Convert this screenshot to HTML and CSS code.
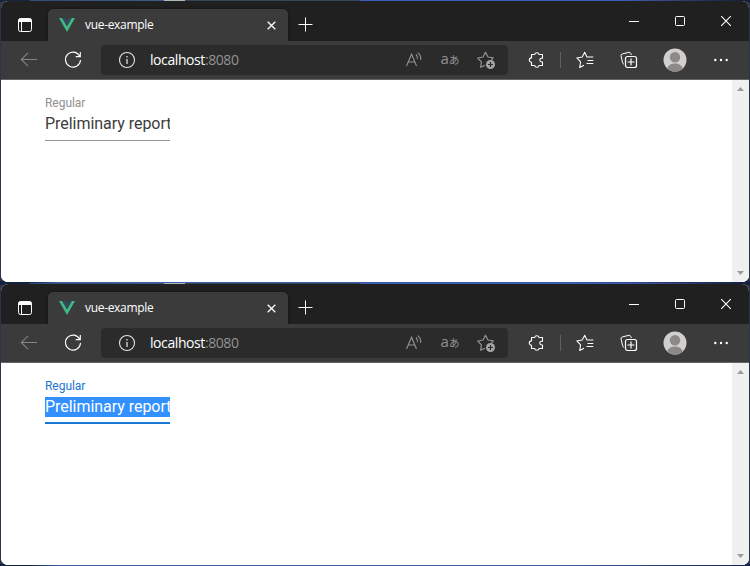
FILE: index.html
```
<!DOCTYPE html>
<html lang="en">
<head>
<meta charset="utf-8">
<title>vue-example</title>
<link rel="stylesheet" href="styles.css">
</head>
<body>
<svg class="defs" aria-hidden="true">
  <symbol id="panes" viewBox="0 0 24 24"><rect x="5.5" y="5.5" width="13" height="13" rx="2" fill="none" stroke="#fff"/><path d="M5.5 7q0-1.500 1.500-1.500h10q1.500 0 1.500 1.500v2h-13z" fill="#fff"/><path d="M8.500 9v9.500" stroke="#fff"/></symbol>
  <symbol id="vue" viewBox="0 0 16 14"><path d="M0 0h3.200L8 8.300 12.800 0H16L8 14z" fill="#41b883"/><path d="M3.200 0h3L8 3.100 9.800 0h3L8 8.300z" fill="#35495e"/></symbol>
  <symbol id="close" viewBox="0 0 9 9"><path d="M.7.7l7.600 7.600M8.300.7L.7 8.300" stroke="#fff" stroke-width="1.300"/></symbol>
  <symbol id="plus" viewBox="0 0 15 15"><path d="M7.500.5v14M.5 7.500h14" stroke="#fff" stroke-width="1"/></symbol>
  <symbol id="min" viewBox="0 0 12 12"><path d="M1 6.500h10" stroke="#fff"/></symbol>
  <symbol id="max" viewBox="0 0 12 12"><rect x="1.500" y="1.500" width="9" height="9" rx="1" fill="none" stroke="#fff"/></symbol>
  <symbol id="quit" viewBox="0 0 12 12"><path d="M1.200 1.200l9.600 9.600M10.800 1.200L1.200 10.800" stroke="#fff" stroke-width="1.100"/></symbol>
  <symbol id="back" viewBox="0 0 24 24"><path d="M20 11.500H4.500M11 4.800L4.300 11.500l6.700 6.700" fill="none" stroke="#848484" stroke-width="1.100"/></symbol>
  <symbol id="reload" viewBox="0 0 24 24"><path d="M18.700 8.200A7.500 7.500 0 1 0 19.500 12M19.300 4v4.600h-4.600" fill="none" stroke="#fff" stroke-width="1.100"/></symbol>
  <symbol id="info" viewBox="0 0 24 24"><circle cx="12" cy="12" r="7.500" fill="none" stroke="#e4e4e4" stroke-width="1.100"/><path d="M12 11v5M12 8v1.600" stroke="#c8c8c8" stroke-width="1.500"/></symbol>
  <symbol id="aloud" viewBox="0 0 24 24"><path d="M4.500 18L9.600 6.200 14.500 18M6.200 14h6.700M14 6.500q1.900 2 1.400 4.700M15.800 4.600q3.700 3.300 2.800 7.300" fill="none" stroke="#929292" stroke-width="1.100"/></symbol>
  <symbol id="addfav" viewBox="0 0 24 24"><path d="M11 17.200L6.700 19.300l.7-5.400L3.700 10l5.300-1L11.500 4.200 14 9l5.300.9-2 2.100" fill="none" stroke="#929292" stroke-width="1.200" stroke-linejoin="round"/><circle cx="16.500" cy="16.500" r="4.500" fill="#a5a5a5"/><path d="M16.500 14v5M14 16.500h5" stroke="#2b2b2b" stroke-width="1.200"/></symbol>
  <symbol id="puzzle" viewBox="0 0 24 24"><path d="M6.500 6.500h3.200a2.200 2.200 0 0 1 4.300 0h3.500v3.700h-.8a1.900 1.900 0 0 0 0 3.800h.8v3.500h-3.500a2.200 2.200 0 0 1-4.300 0H6.500v-3.200a2.200 2.200 0 0 1 0-4.400z" fill="none" stroke="#fff" stroke-width="1.100" stroke-linejoin="round"/></symbol>
  <symbol id="favs" viewBox="0 0 24 24"><path d="M11 17.200L6.700 19.500l.9-5.600-3.800-4 5.400-.8L11.700 4.300l2.200 4.600h6.400M14.500 12.500h5.800M13.500 15.500h6.800" fill="none" stroke="#fff" stroke-width="1.050" stroke-linejoin="round"/></symbol>
  <symbol id="collections" viewBox="0 0 24 24"><path d="M7 16.300q-1-.4-1.400-1.600L4 7.800q-.2-1.400 1.200-1.800l6.600-1.700q1.400-.2 2 1.200l.5 1.500" fill="none" stroke="#fff"/><rect x="8.500" y="8.500" width="11" height="11" rx="2" fill="none" stroke="#fff" stroke-width="1.200"/><path d="M14 10.500v7M10.500 14h7" stroke="#fff" stroke-width="1.200"/></symbol>
  <symbol id="avatar" viewBox="0 0 24 24"><circle cx="12" cy="12" r="11.500" fill="#d2d0ce"/><circle cx="12" cy="9.300" r="5.200" fill="#8d8986"/><path d="M4.200 20.200Q6 15.500 12 15.500t7.800 4.700Q16.700 23.400 12 23.400t-7.800-3.200z" fill="#8d8986"/></symbol>
  <symbol id="more" viewBox="0 0 24 24"><g fill="#fff"><circle cx="6.300" cy="12" r="1.200"/><circle cx="12" cy="12" r="1.200"/><circle cx="17.700" cy="12" r="1.200"/></g></symbol>
  <symbol id="arrow" viewBox="0 0 7 4"><path d="M0 4L3.500 0 7 4z" fill="#9a9a9a"/></symbol>
</svg>

<section class="desktop">
  <div class="window">
    <header class="titlebar">
      <svg class="icon panes"><use href="#panes"/></svg>
      <div class="tab"><svg class="logo"><use href="#vue"/></svg><span class="tab-title">vue-example</span><svg class="tab-close"><use href="#close"/></svg></div>
      <svg class="new-tab"><use href="#plus"/></svg>
      <div class="controls"><span><svg><use href="#min"/></svg></span><span><svg><use href="#max"/></svg></span><span><svg><use href="#quit"/></svg></span></div>
    </header>
    <nav class="toolbar">
      <span class="btn"><svg class="icon"><use href="#back"/></svg></span>
      <span class="btn"><svg class="icon"><use href="#reload"/></svg></span>
      <div class="address"><svg class="icon"><use href="#info"/></svg><span class="url">localhost<span class="port">:8080</span></span><svg class="icon"><use href="#aloud"/></svg><span class="translate">a<small>あ</small></span><svg class="icon"><use href="#addfav"/></svg></div>
      <span class="btn puzzle"><svg class="icon"><use href="#puzzle"/></svg></span>
      <i class="divider"></i>
      <span class="btn"><svg class="icon"><use href="#favs"/></svg></span>
      <span class="btn"><svg class="icon"><use href="#collections"/></svg></span>
      <span class="btn spaced"><svg class="icon"><use href="#avatar"/></svg></span>
      <span class="btn spaced"><svg class="icon"><use href="#more"/></svg></span>
    </nav>
    <main class="page">
      <div class="field"><div class="label">Regular</div><div class="value"><span>Preliminary report</span></div></div>
      <div class="scrollbar"><svg><use href="#arrow"/></svg><svg class="down"><use href="#arrow"/></svg></div>
    </main>
  </div>
</section>

<section class="desktop">
  <div class="window">
    <header class="titlebar">
      <svg class="icon panes"><use href="#panes"/></svg>
      <div class="tab"><svg class="logo"><use href="#vue"/></svg><span class="tab-title">vue-example</span><svg class="tab-close"><use href="#close"/></svg></div>
      <svg class="new-tab"><use href="#plus"/></svg>
      <div class="controls"><span><svg><use href="#min"/></svg></span><span><svg><use href="#max"/></svg></span><span><svg><use href="#quit"/></svg></span></div>
    </header>
    <nav class="toolbar">
      <span class="btn"><svg class="icon"><use href="#back"/></svg></span>
      <span class="btn"><svg class="icon"><use href="#reload"/></svg></span>
      <div class="address"><svg class="icon"><use href="#info"/></svg><span class="url">localhost<span class="port">:8080</span></span><svg class="icon"><use href="#aloud"/></svg><span class="translate">a<small>あ</small></span><svg class="icon"><use href="#addfav"/></svg></div>
      <span class="btn puzzle"><svg class="icon"><use href="#puzzle"/></svg></span>
      <i class="divider"></i>
      <span class="btn"><svg class="icon"><use href="#favs"/></svg></span>
      <span class="btn"><svg class="icon"><use href="#collections"/></svg></span>
      <span class="btn spaced"><svg class="icon"><use href="#avatar"/></svg></span>
      <span class="btn spaced"><svg class="icon"><use href="#more"/></svg></span>
    </nav>
    <main class="page">
      <div class="field focused"><div class="label">Regular</div><div class="value"><span>Preliminary report</span></div></div>
      <div class="scrollbar"><svg><use href="#arrow"/></svg><svg class="down"><use href="#arrow"/></svg></div>
    </main>
  </div>
</section>
</body>
</html>
```
FILE: styles.css
```
* { box-sizing: border-box; }
body { margin: 0; width: 750px; height: 566px; overflow: hidden; font-family: "Open Sans", "Noto Sans", sans-serif; }
svg { display: block; flex: none; }
.defs { display: none; }
.icon { width: 24px; height: 24px; }

.desktop {
  height: 283px;
  padding: 1px 1px 0;
  background:
    linear-gradient(90deg, #17253f 0 30px, #345078 30px 60px, #3d5a8c 164px, #b4b8b4 164px 185px, #35465a 185px 360px, #3c5cbc 360px 620px, #3a4a88 660px, #182038 740px) top / 100% 2px no-repeat,
    linear-gradient(90deg, #14233c 0 30px, #3c60a8 60px 560px, #14204a) bottom / 100% 2px no-repeat,
    #2b3449;
}
.window {
  display: flex;
  flex-direction: column;
  height: 281px;
  overflow: hidden;
  border-radius: 7px;
  background: #fff;
}

.titlebar { display: flex; flex: none; height: 40px; background: #202020; }
.panes { margin: 12px 11px 0 12px; }
.tab {
  display: flex;
  align-items: center;
  width: 240px;
  height: 32px;
  margin-top: 8px;
  padding: 0 12px 0 11px;
  border-radius: 5px 5px 0 0;
  background: #3b3b3b;
  box-shadow: 0 0 3px #111;
}
.logo { width: 16px; height: 14px; margin-right: 10px; }
.tab-title { flex: 1; color: #fff; font-size: 12px; line-height: 16px; letter-spacing: -.32px; }
.tab-close { width: 9px; height: 9px; margin-top: 1px; }
.new-tab { width: 15px; height: 15px; margin: 16px 0 0 10px; }
.controls { display: flex; margin-left: auto; }
.controls span { display: flex; justify-content: center; width: 46px; padding-top: 14px; }
.controls svg { width: 12px; height: 12px; }

.toolbar {
  position: relative;
  display: flex;
  flex: none;
  align-items: center;
  height: 39px;
  padding: 0 6px 1px;
  border-bottom: 1px solid #646464;
  background: #3b3b3b;
}
.btn { display: flex; justify-content: center; width: 44px; }
.puzzle { margin-left: 7px; }
.spaced { margin-left: 2px; }
.divider { width: 1px; height: 16px; margin: 0 2px 0 1px; background: #606060; }
.address {
  display: flex;
  align-items: center;
  width: 407px;
  height: 30px;
  margin-left: 6px;
  padding: 0 10px 0 14px;
  border-radius: 4px;
  background: #2b2b2b;
}
.url { flex: 1; margin-left: 11px; color: #fff; font-size: 14px; line-height: 20px; letter-spacing: -.42px; }
.port { color: #929292; }
.translate { display: flex; align-items: baseline; justify-content: center; width: 24px; height: 22px; margin: 0 12px; color: #929292; font: 15px/18px "Open Sans", "Noto Sans CJK JP", sans-serif; white-space: nowrap; }
.translate small { font: 10.5px/12px "Noto Sans CJK JP", sans-serif; }

.page { display: flex; flex: 1; justify-content: space-between; background: #fff; }
.field { width: 125px; margin: 13px 0 0 44px; font-family: Roboto, sans-serif; }
.label { height: 20px; color: #909090; font-size: 12px; line-height: 20px; letter-spacing: -.04px; }
.value { height: 28px; overflow: hidden; border-bottom: 1px solid #949494; color: #3c3c3c; font-size: 16px; line-height: 20px; letter-spacing: -.04px; white-space: nowrap; }
.value span { display: block; height: 20px; margin-top: 1px; }
.focused .label { color: #1976d2; }
.focused .value { border-bottom: 2px solid #1976d2; }
.focused .value span { background: #3390ff; color: #fff; }
.scrollbar { display: flex; flex-direction: column; justify-content: space-between; align-items: center; width: 17px; padding: 7px 0; background: #f0f0f0; }
.scrollbar svg { width: 7px; height: 4px; }
.scrollbar .down { transform: rotate(180deg); }
```
